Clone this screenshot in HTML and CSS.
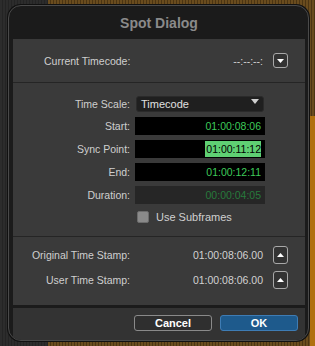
FILE: index.html
```html
<!DOCTYPE html>
<html lang="en">

<head>
    <meta charset="UTF-8" />
    <meta name="viewport" content="width=device-width, initial-scale=1.0" />
    <title>Spot Dialog</title>
    <link rel="stylesheet" href="styles.css">
</head>

<body>

    <div class="dialog">
        <div class="title">Spot Dialog</div>

        <div class="panel">
            <div class="section current">
                <span class="label">Current Timecode:</span>
                <span class="value">--:--:--:</span>
                <button class="mini-btn" aria-label="menu">
                    <svg width="7" height="4" viewBox="0 0 7 4"><path d="M0 0 H7 L3.5 4 Z" fill="#fff" /></svg>
                </button>
            </div>

            <div class="section fields">
                <div class="row">
                    <span class="label">Time Scale:</span>
                    <div class="select">
                        <span>Timecode</span>
                        <svg width="8" height="5" viewBox="0 0 8 5"><path d="M0 0 H8 L4 5 Z" fill="#cfcfcf" /></svg>
                    </div>
                </div>
                <div class="row">
                    <span class="label">Start:</span>
                    <div class="tc">01:00:08:06</div>
                </div>
                <div class="row">
                    <span class="label">Sync Point:</span>
                    <div class="tc"><span class="selected">01:00:11:12</span></div>
                </div>
                <div class="row">
                    <span class="label">End:</span>
                    <div class="tc">01:00:12:11</div>
                </div>
                <div class="row">
                    <span class="label">Duration:</span>
                    <div class="tc disabled">00:00:04:05</div>
                </div>
                <div class="row">
                    <span></span>
                    <label class="check"><span class="box"></span>Use Subframes</label>
                </div>
            </div>

            <div class="section stamps">
                <div class="stamp">
                    <span class="label">Original Time Stamp:</span>
                    <span class="value">01:00:08:06.00</span>
                    <button class="mini-btn tall" aria-label="apply">
                        <svg width="7" height="4" viewBox="0 0 7 4"><path d="M0 4 H7 L3.5 0 Z" fill="#fff" /></svg>
                    </button>
                </div>
                <div class="stamp">
                    <span class="label">User Time Stamp:</span>
                    <span class="value">01:00:08:06.00</span>
                    <button class="mini-btn tall" aria-label="apply">
                        <svg width="7" height="4" viewBox="0 0 7 4"><path d="M0 4 H7 L3.5 0 Z" fill="#fff" /></svg>
                    </button>
                </div>
            </div>
        </div>

        <div class="actions">
            <button class="btn">Cancel</button>
            <button class="btn primary">OK</button>
        </div>
    </div>

</body>

</html>
```

FILE: styles.css
```css
* {
    margin: 0;
    padding: 0;
    box-sizing: border-box;
    font-family: 'Liberation Sans', Arial, sans-serif;
}

body {
    width: 315px;
    height: 346px;
    overflow: hidden;
    background:
        repeating-linear-gradient(90deg, #2c2c2c 0 2px, #242424 2px 3px) left top / 48px 100% no-repeat,
        linear-gradient(180deg, transparent 0 116px, #b0700e 116px) right top / 5px 100% no-repeat,
        repeating-linear-gradient(90deg, #6a4c1e 0 2px, #4c3513 2px 3px);
    padding: 5px 6px 5px 8px;
}

.dialog {
    width: 301px;
    height: 336px;
    background: #1b1b1b;
    border: 1px solid #4a4a4a;
    border-radius: 13px;
    box-shadow: 0 0 0 1px #111;
    display: flex;
    flex-direction: column;
    padding: 0 3px 0 4px;
    overflow: hidden;
}

.title {
    height: 33px;
    display: flex;
    align-items: center;
    justify-content: center;
    font-size: 14px;
    font-weight: bold;
    color: #8a8a8a;
}

.panel {
    background: #3a3a3a;
    display: flex;
    flex-direction: column;
}

.section {
    border-bottom: 1px solid #252525;
}

.section:last-child {
    border-bottom: none;
}

.label {
    font-size: 10.5px;
    color: #cfcfcf;
}

.value {
    font-size: 10.5px;
    color: #d2d2d2;
}

.current {
    height: 44px;
    display: flex;
    align-items: center;
    padding: 0 17px 0 31px;
}

.current .label {
    flex: 1;
}

.mini-btn {
    width: 15px;
    height: 15px;
    margin-left: 10px;
    background: #333;
    border: 1px solid #a8a8a8;
    border-radius: 3px;
    display: flex;
    align-items: center;
    justify-content: center;
}

.mini-btn.tall {
    height: 18px;
}

.fields {
    height: 154px;
    padding-top: 13px;
    display: flex;
    flex-direction: column;
    gap: 5px;
}

.row {
    display: grid;
    grid-template-columns: 117px 130px;
    column-gap: 5px;
    align-items: center;
}

.row .label {
    text-align: right;
}

.select {
    height: 16px;
    margin-left: 1px;
    width: 128px;
    background: #1f1f1f;
    border: 1px solid #2a2a2a;
    border-radius: 3px;
    display: flex;
    align-items: center;
    justify-content: space-between;
    padding: 0 4px 0 4px;
    font-size: 11px;
    color: #e0e0e0;
}

.select svg {
    margin-top: -5px;
}

.tc {
    height: 18px;
    background: #000;
    display: flex;
    align-items: center;
    justify-content: flex-end;
    padding-right: 4px;
    font-size: 10.5px;
    color: #3ecb5a;
}

.tc .selected {
    background: #5fd073;
    color: #000;
    padding: 2px 0 2px 1px;
}

.tc.disabled {
    background: #262626;
    color: #267a3c;
}

.check {
    display: flex;
    align-items: center;
    gap: 7px;
    font-size: 11px;
    color: #d0d0d0;
    padding-left: 2px;
    height: 16px;
}

.check .box {
    width: 12px;
    height: 12px;
    background: #8a8a8a;
    border: 1px solid #6c6c6c;
    border-radius: 2px;
}

.stamps {
    height: 68px;
    padding: 9px 17px 0 0;
    display: flex;
    flex-direction: column;
    gap: 7px;
}

.stamp {
    display: flex;
    align-items: center;
}

.stamp .label {
    width: 117px;
    text-align: right;
}

.stamp .value {
    flex: 1;
    text-align: right;
}

.actions {
    flex: 1;
    margin-top: 3px;
    background: #333;
    display: flex;
    justify-content: flex-end;
    align-items: flex-start;
    gap: 8px;
    padding: 7px 7px 0 0;
}

.btn {
    width: 78px;
    height: 16px;
    border-radius: 3px;
    border: 1px solid #8a8a8a;
    background: #2f2f2f;
    color: #fff;
    font-size: 11px;
    font-weight: bold;
}

.btn.primary {
    background: #1e5a8c;
    border-color: #3e7cb4;
}
```
